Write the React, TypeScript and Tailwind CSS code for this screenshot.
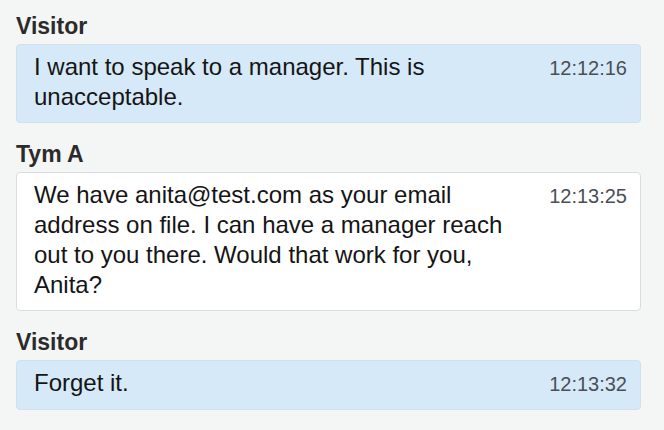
import React from "react";

type Message = {
  author: string;
  text: string;
  time: string;
  mine?: boolean;
};

const messages: Message[] = [
  {
    author: "Visitor",
    text: "I want to speak to a manager. This is unacceptable.",
    time: "12:12:16",
  },
  {
    author: "Tym A",
    text: "We have anita@test.com as your email address on file. I can have a manager reach out to you there. Would that work for you, Anita?",
    time: "12:13:25",
    mine: true,
  },
  {
    author: "Visitor",
    text: "Forget it.",
    time: "12:13:32",
  },
];

function ChatMessage({ msg }: { msg: Message }) {
  return (
    <div>
      <div className="text-[23px] leading-[28px] font-bold text-[#2b2b2b] mb-1">
        {msg.author}
      </div>
      <div
        className={
          msg.mine
            ? "flex items-baseline rounded-[4px] border border-[#dadde0] bg-white pl-[17px] pr-[13px] pt-[7px] pb-[10px]"
            : "flex items-baseline rounded-[4px] border border-[#cfe0ee] bg-[#d6e9f8] pl-[17px] pr-[13px] pt-[7px] pb-[10px]"
        }
      >
        <div className="flex-1 text-[24px] leading-[30px] text-[#151515]">
          {msg.text}
        </div>
        <div className="pl-6 text-[20px] leading-[30px] text-[#4a4f55]">
          {msg.time}
        </div>
      </div>
    </div>
  );
}

export default function App() {
  return (
    <div
      className="w-[664px] h-[430px] overflow-hidden bg-[#f4f5f5] pt-3 pl-4 pr-[23px]"
      style={{ fontFamily: '"Liberation Sans", Arial, sans-serif' }}
    >
      <div className="flex flex-col gap-[17px]">
        {messages.map((m, i) => (
          <ChatMessage key={i} msg={m} />
        ))}
      </div>
    </div>
  );
}
